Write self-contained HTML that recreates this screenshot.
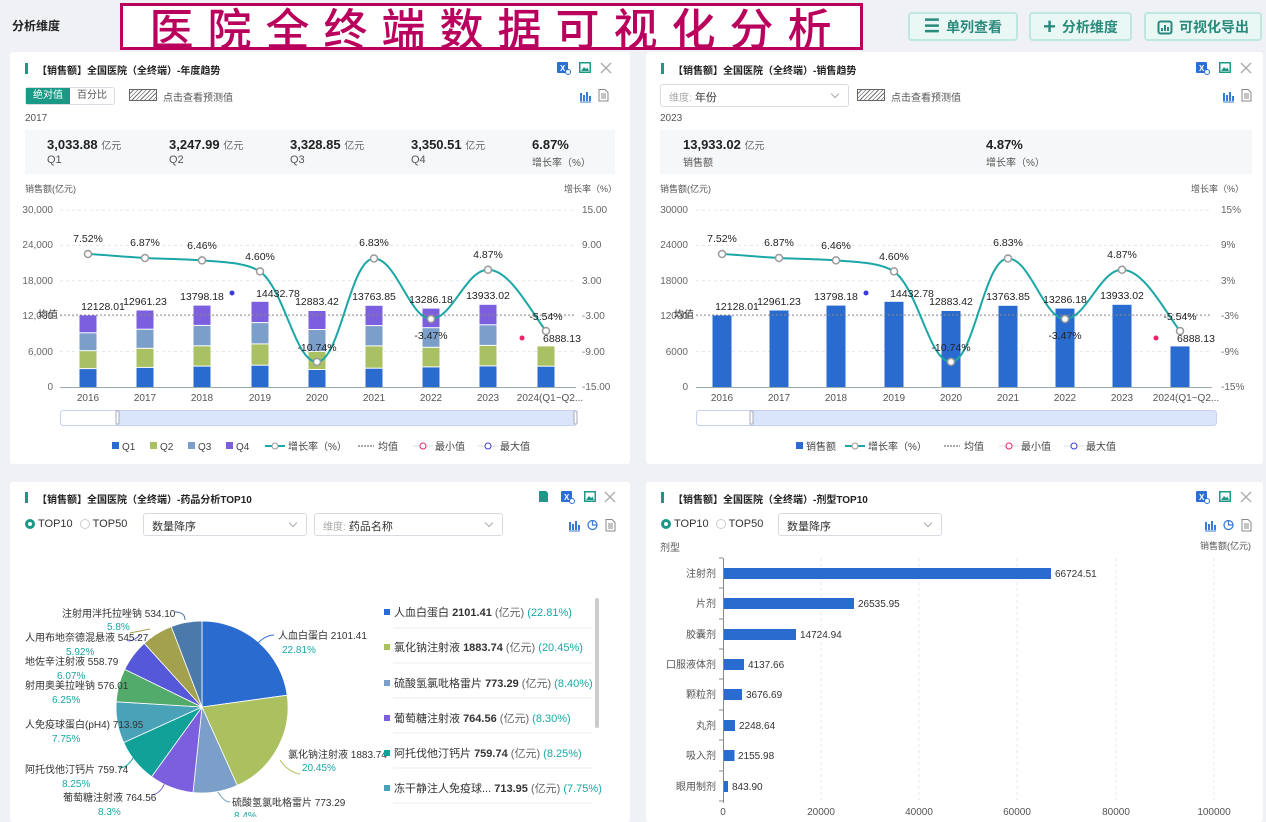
<!DOCTYPE html>
<html><head><meta charset="utf-8">
<style>
*{margin:0;padding:0;box-sizing:border-box}
body{width:1266px;height:817px;overflow:hidden;background:#eff1f5;font-family:"Liberation Sans","Noto Sans CJK SC",sans-serif;color:#333;position:relative}
.a{position:absolute}
.panel{position:absolute;background:#fff;border-radius:3px}
.title{position:absolute;font-size:10px;font-weight:bold;color:#222;white-space:nowrap}
.title:before{content:"";position:absolute;left:-12px;top:1px;width:3px;height:11px;background:#1a9a86}
.btn{position:absolute;top:12px;height:29px;border:2px solid #bfe6df;background:#e9f7f5;border-radius:4px;color:#2a8a7c;font-size:14px;font-weight:bold;display:flex;align-items:center;justify-content:center;gap:6px}
.sel{position:absolute;height:23px;border:1px solid #d8dce2;border-radius:3px;background:#fff;font-size:11px;color:#333;padding:4px 8px}
.sel:after{content:"";position:absolute;right:10px;top:6px;width:5px;height:5px;border-right:1px solid #aaa;border-bottom:1px solid #aaa;transform:rotate(45deg)}
.stat{position:absolute;background:#f6f7f8}
.num{font-size:13px;font-weight:bold;color:#222}
.num small{font-size:10px;font-weight:normal;color:#666}
.lbl{font-size:11px;color:#555}
.hatch{position:absolute;width:28px;height:12px;border:1px solid #666;background:repeating-linear-gradient(135deg,#fff 0 2px,#777 2px 3px)}
</style></head><body>

<div class="a" style="left:12px;top:17px;font-size:12px;font-weight:bold;color:#222">分析维度</div>
<div class="a" style="left:120px;top:3px;width:743px;height:47px;border:3px solid #b8005c;background:#fff;color:#b8005c;font-size:44px;line-height:40px;text-align:center;letter-spacing:14px;padding-left:12px;font-weight:500;font-family:'Noto Sans CJK SC',sans-serif;white-space:nowrap;overflow:hidden">医院全终端数据可视化分析</div>
<div class="btn" style="left:908px;width:110px"><span style="font-size:18px">☰</span>单列查看</div>
<div class="btn" style="left:1029px;width:103px"><span style="font-size:22px;font-weight:bold">+</span>分析维度</div>
<div class="btn" style="left:1144px;width:118px"><svg width="16" height="16" viewBox="0 0 16 16"><rect x="1.5" y="2.5" width="13" height="12" rx="2" fill="none" stroke="#2a8a7c" stroke-width="2"/><path d="M5 12V9M8 12V6M11 12V8" stroke="#2a8a7c" stroke-width="2"/></svg>可视化导出</div>

<div class="panel" style="left:10px;top:52px;width:620px;height:412px"></div>
<div class="panel" style="left:646px;top:52px;width:617px;height:412px"></div>
<div class="panel" style="left:10px;top:482px;width:620px;height:340px"></div>
<div class="panel" style="left:646px;top:482px;width:617px;height:340px"></div>

<div class="title" style="left:37px;top:62px">【销售额】全国医院（全终端）-年度趋势</div>
<div class="a" style="left:25px;top:87px;width:90px;height:18px;border:1px solid #d8dce2;border-radius:3px;font-size:10px;display:flex">
<span style="width:45px;background:#1a9a86;color:#fff;text-align:center;line-height:16px">绝对值</span><span style="width:45px;text-align:center;line-height:16px;color:#555">百分比</span></div>
<div class="hatch" style="left:129px;top:89px"></div>
<div class="a lbl" style="left:163px;top:89px;font-size:10px">点击查看预测值</div>
<div class="a lbl" style="left:25px;top:113px;font-size:10px">2017</div>
<div class="stat" style="left:25px;top:130px;width:590px;height:44px"></div>
<div class="a" style="left:47px;top:137px"><div class="num">3,033.88 <small>亿元</small></div><div class="lbl" style="margin-top:2px">Q1</div></div>
<div class="a" style="left:169px;top:137px"><div class="num">3,247.99 <small>亿元</small></div><div class="lbl" style="margin-top:2px">Q2</div></div>
<div class="a" style="left:290px;top:137px"><div class="num">3,328.85 <small>亿元</small></div><div class="lbl" style="margin-top:2px">Q3</div></div>
<div class="a" style="left:411px;top:137px"><div class="num">3,350.51 <small>亿元</small></div><div class="lbl" style="margin-top:2px">Q4</div></div>
<div class="a" style="left:532px;top:137px"><div class="num">6.87%</div><div class="lbl" style="margin-top:2px;font-size:10px">增长率（%）</div></div>
<div class="a lbl" style="left:25px;top:182px;font-size:9px">销售额(亿元)</div>
<div class="a lbl" style="left:564px;top:182px;font-size:9px">增长率（%）</div>

<div class="title" style="left:673px;top:62px">【销售额】全国医院（全终端）-销售趋势</div>
<div class="sel" style="left:660px;top:84px;width:189px"><span style="color:#aaa;font-size:10px">维度:</span> 年份</div>
<div class="hatch" style="left:857px;top:89px"></div>
<div class="a lbl" style="left:891px;top:89px;font-size:10px">点击查看预测值</div>
<div class="a lbl" style="left:660px;top:113px;font-size:10px">2023</div>
<div class="stat" style="left:660px;top:130px;width:592px;height:44px"></div>
<div class="a" style="left:683px;top:137px"><div class="num">13,933.02 <small>亿元</small></div><div class="lbl" style="margin-top:2px;font-size:10px">销售额</div></div>
<div class="a" style="left:986px;top:137px"><div class="num">4.87%</div><div class="lbl" style="margin-top:2px;font-size:10px">增长率（%）</div></div>
<div class="a lbl" style="left:660px;top:182px;font-size:9px">销售额(亿元)</div>
<div class="a lbl" style="left:1191px;top:182px;font-size:9px">增长率（%）</div>

<div class="title" style="left:37px;top:491px">【销售额】全国医院（全终端）-药品分析TOP10</div>
<div class="a" style="left:25px;top:518px;font-size:11px;display:flex;align-items:center;gap:3px"><span style="width:10px;height:10px;border-radius:50%;border:3px solid #1a9a86"></span>TOP10 <span style="width:10px;height:10px;border-radius:50%;border:1px solid #ccc;margin-left:4px"></span>TOP50</div>
<div class="sel" style="left:143px;top:513px;width:164px">数量降序</div>
<div class="sel" style="left:314px;top:513px;width:189px"><span style="color:#aaa;font-size:10px">维度:</span> 药品名称</div>

<div class="title" style="left:673px;top:491px">【销售额】全国医院（全终端）-剂型TOP10</div>
<div class="a" style="left:661px;top:518px;font-size:11px;display:flex;align-items:center;gap:3px"><span style="width:10px;height:10px;border-radius:50%;border:3px solid #1a9a86"></span>TOP10 <span style="width:10px;height:10px;border-radius:50%;border:1px solid #ccc;margin-left:4px"></span>TOP50</div>
<div class="sel" style="left:778px;top:513px;width:164px">数量降序</div>
<div class="a lbl" style="left:660px;top:539px;font-size:10px">剂型</div>
<div class="a lbl" style="left:1200px;top:539px;font-size:9px">销售额(亿元)</div>

<svg class="a" style="left:0;top:0" width="1266" height="817" font-family="Liberation Sans, Noto Sans CJK SC, sans-serif">
<defs>
<g id="xl"><rect x="0" y="0" width="11" height="11" rx="1" fill="#2b6fd6"/><text x="3" y="9" font-size="8" fill="#fff" font-weight="bold">X</text><circle cx="11" cy="10" r="2.5" fill="#fff" stroke="#2b6fd6"/></g>
<g id="img"><rect x="0" y="0" width="12" height="11" fill="#1a9a86"/><rect x="1.5" y="1.5" width="9" height="8" fill="#fff"/><path d="M2 9l3-4 2 2 1.5-1.5L10 9z" fill="#1a9a86"/></g>
<g id="cl"><path d="M0 0l10 10M10 0L0 10" stroke="#aaa" stroke-width="1.3"/></g>
<g id="bar"><path d="M1 11V3M4 11V5M7 11V2M10 11V6" stroke="#3a7bd5" stroke-width="2"/><path d="M0 12H11" stroke="#3a7bd5"/></g>
<g id="doc"><path d="M1 0.5h6l3 3v8.5h-9z" fill="none" stroke="#888"/><path d="M3 5h5M3 7h5M3 9h5" stroke="#888"/></g>
<g id="pie"><circle cx="5.5" cy="6" r="4.5" fill="none" stroke="#3a7bd5" stroke-width="1.3"/><path d="M5.5 1.5V6H10" fill="none" stroke="#3a7bd5" stroke-width="1.3"/></g>
</defs>
<use href="#xl" x="557" y="62"/><use href="#img" x="579" y="62"/><use href="#cl" x="601" y="63"/>
<use href="#bar" x="580" y="90"/><use href="#doc" x="598" y="89"/>
<use href="#xl" x="1196" y="62"/><use href="#img" x="1219" y="62"/><use href="#cl" x="1241" y="63"/>
<use href="#bar" x="1223" y="90"/><use href="#doc" x="1241" y="89"/>
<path d="M539 491h7l2 2v9h-9z" fill="#1a9a86"/><use href="#xl" x="561" y="491"/><use href="#img" x="584" y="491"/><use href="#cl" x="605" y="492"/>
<use href="#bar" x="569" y="519"/><use href="#pie" x="587" y="519"/><use href="#doc" x="605" y="519"/>
<use href="#xl" x="1196" y="491"/><use href="#img" x="1219" y="491"/><use href="#cl" x="1241" y="492"/>
<use href="#bar" x="1205" y="519"/><use href="#pie" x="1223" y="519"/><use href="#doc" x="1241" y="519"/>

<g stroke="#e3e8ee" stroke-dasharray="3,3">
<path d="M60 210H576M60 245.4H576M60 280.8H576M60 316.2H576M60 351.6H576"/>
<path d="M696 210H1212M696 245.4H1212M696 280.8H1212M696 316.2H1212M696 351.6H1212"/>
</g>
<path d="M60 387.5H576M696 387.5H1212" stroke="#9aa" />
<g font-size="10" fill="#666" text-anchor="end">
<text x="53" y="213">30,000</text><text x="53" y="248">24,000</text><text x="53" y="284">18,000</text><text x="53" y="319">12,000</text><text x="53" y="355">6,000</text><text x="53" y="390">0</text>
<text x="688" y="213">30000</text><text x="688" y="248">24000</text><text x="688" y="284">18000</text><text x="688" y="319">12000</text><text x="688" y="355">6000</text><text x="688" y="390">0</text>
</g>
<g font-size="10" fill="#666">
<text x="582" y="213">15.00</text><text x="582" y="248">9.00</text><text x="582" y="284">3.00</text><text x="582" y="319">-3.00</text><text x="582" y="355">-9.00</text><text x="582" y="390">-15.00</text>
<text x="1221" y="213">15%</text><text x="1221" y="248">9%</text><text x="1221" y="284">3%</text><text x="1221" y="319">-3%</text><text x="1221" y="355">-9%</text><text x="1221" y="390">-15%</text>
</g>
<g font-size="10" fill="#555" text-anchor="middle">
<text x="88" y="401">2016</text><text x="145" y="401">2017</text><text x="202" y="401">2018</text><text x="260" y="401">2019</text><text x="317" y="401">2020</text><text x="374" y="401">2021</text><text x="431" y="401">2022</text><text x="488" y="401">2023</text><text x="550" y="401">2024(Q1~Q2...</text>
<text x="722" y="401">2016</text><text x="779" y="401">2017</text><text x="836" y="401">2018</text><text x="894" y="401">2019</text><text x="951" y="401">2020</text><text x="1008" y="401">2021</text><text x="1065" y="401">2022</text><text x="1122" y="401">2023</text><text x="1186" y="401">2024(Q1~Q2...</text>
</g>
<g>
<g fill="#2a6bcf"><rect x="79.5" y="369.1" width="17" height="17.9"/><rect x="136.5" y="367.9" width="17" height="19.1"/><rect x="193.5" y="366.6" width="17" height="20.4"/><rect x="251.5" y="365.7" width="17" height="21.3"/><rect x="308.5" y="370" width="17" height="17"/><rect x="365.5" y="368.7" width="17" height="18.3"/><rect x="422.5" y="367.4" width="17" height="19.6"/><rect x="479.5" y="366.4" width="17" height="20.6"/><rect x="537.5" y="366.7" width="17" height="20.3"/></g>
<g fill="#a9c162"><rect x="79.5" y="351.2" width="17" height="16.9"/><rect x="136.5" y="348.8" width="17" height="18.1"/><rect x="193.5" y="346.3" width="17" height="19.3"/><rect x="251.5" y="344.4" width="17" height="20.3"/><rect x="308.5" y="352" width="17" height="17"/><rect x="365.5" y="346.4" width="17" height="21.3"/><rect x="422.5" y="347.8" width="17" height="18.6"/><rect x="479.5" y="345.9" width="17" height="19.5"/><rect x="537.5" y="346.4" width="17" height="19.3"/></g>
<g fill="#7c9fc9"><rect x="79.5" y="333.3" width="17" height="16.9"/><rect x="136.5" y="329.7" width="17" height="18.1"/><rect x="193.5" y="325.9" width="17" height="19.4"/><rect x="251.5" y="323.1" width="17" height="20.3"/><rect x="308.5" y="330" width="17" height="21"/><rect x="365.5" y="326.1" width="17" height="19.3"/><rect x="422.5" y="328.2" width="17" height="18.6"/><rect x="479.5" y="325.3" width="17" height="19.6"/></g>
<g fill="#7b5fdf"><rect x="79.5" y="315.4" width="17" height="16.9"/><rect x="136.5" y="310.5" width="17" height="18.2"/><rect x="193.5" y="305.6" width="17" height="19.3"/><rect x="251.5" y="301.8" width="17" height="20.3"/><rect x="308.5" y="311" width="17" height="18"/><rect x="365.5" y="305.8" width="17" height="19.3"/><rect x="422.5" y="308.6" width="17" height="18.6"/><rect x="479.5" y="304.8" width="17" height="19.5"/></g>
</g>
<g fill="#2a6bcf"><rect x="712.5" y="315.4" width="19" height="71.6"/><rect x="769.5" y="310.5" width="19" height="76.5"/><rect x="826.5" y="305.6" width="19" height="81.4"/><rect x="884.5" y="301.8" width="19" height="85.2"/><rect x="941.5" y="311" width="19" height="76"/><rect x="998.5" y="305.8" width="19" height="81.2"/><rect x="1055.5" y="308.6" width="19" height="78.4"/><rect x="1112.5" y="304.8" width="19" height="82.2"/><rect x="1170.5" y="346.4" width="19" height="40.6"/></g>
<path d="M60 315H576M696 315H1212" stroke="#888" stroke-dasharray="2,2"/>
<text x="38" y="318" font-size="10" fill="#333">均值</text><text x="674" y="318" font-size="10" fill="#333">均值</text>
<g id="gl">
<path d="M88,254 C107,255 126,257 145,258 C164,259 183,259 202,260.4 C221,262 245,262 260,271.4 C285,290 295,362 317,361.9 C340,362 350,258.5 374,258.5 C396,258.5 410,319 431,319 C452,319 466,269.8 488,269.8 C510,269.8 530,310 546,331" fill="none" stroke="#1aa7a5" stroke-width="2"/>
<g fill="#fff" stroke="#999" stroke-width="1.5"><circle cx="88" cy="254" r="3.5"/><circle cx="145" cy="258" r="3.5"/><circle cx="202" cy="260.4" r="3.5"/><circle cx="260" cy="271.4" r="3.5"/><circle cx="317" cy="361.9" r="3.5"/><circle cx="374" cy="258.5" r="3.5"/><circle cx="431" cy="319" r="3.5"/><circle cx="488" cy="269.8" r="3.5"/><circle cx="546" cy="331" r="3.5"/></g>
<g font-size="10.5" fill="#222" text-anchor="middle">
<text x="88" y="242">7.52%</text><text x="145" y="246">6.87%</text><text x="202" y="249">6.46%</text><text x="260" y="260">4.60%</text><text x="317" y="351">-10.74%</text><text x="374" y="246">6.83%</text><text x="431" y="339">-3.47%</text><text x="488" y="258">4.87%</text><text x="546" y="320">-5.54%</text>
<text x="103" y="310">12128.01</text><text x="145" y="305">12961.23</text><text x="202" y="300">13798.18</text><text x="278" y="297">14432.78</text><text x="317" y="305">12883.42</text><text x="374" y="300">13763.85</text><text x="431" y="303">13286.18</text><text x="488" y="299">13933.02</text><text x="562" y="342">6888.13</text>
</g>
<circle cx="232" cy="293" r="2.5" fill="#3b3bdd"/><circle cx="522" cy="338" r="2.5" fill="#ee2266"/>
</g>
<use href="#gl" x="634" y="0"/>
<rect x="60.5" y="410.5" width="516" height="15" rx="3" fill="#dae4fa" stroke="#c5d3ee"/><rect x="60.5" y="410.5" width="57" height="15" rx="3" fill="#fff" stroke="#c5d3ee"/><rect x="116" y="411" width="3" height="13" rx="1" fill="#fff" stroke="#aab"/><rect x="574" y="411" width="3" height="13" rx="1" fill="#fff" stroke="#aab"/>
<rect x="696.5" y="410.5" width="520" height="15" rx="3" fill="#dae4fa" stroke="#c5d3ee"/><rect x="696.5" y="410.5" width="55" height="15" rx="3" fill="#fff" stroke="#c5d3ee"/><rect x="750" y="411" width="3" height="13" rx="1" fill="#fff" stroke="#aab"/>
<g font-size="10" fill="#444">
<rect x="112" y="442" width="7" height="7" fill="#2a6bcf"/><text x="122" y="450">Q1</text>
<rect x="150" y="442" width="7" height="7" fill="#a9c162"/><text x="160" y="450">Q2</text>
<rect x="188" y="442" width="7" height="7" fill="#7c9fc9"/><text x="198" y="450">Q3</text>
<rect x="226" y="442" width="7" height="7" fill="#7b5fdf"/><text x="236" y="450">Q4</text>
<path d="M265 446h20" stroke="#1aa7a5" stroke-width="2"/><circle cx="275" cy="446" r="3" fill="#fff" stroke="#999"/><text x="288" y="450">增长率（%）</text>
<path d="M358 446h16" stroke="#555" stroke-dasharray="2,1"/><text x="378" y="450">均值</text>
<path d="M413 446h20" stroke="#ddd"/><circle cx="423" cy="446" r="3" fill="#fff" stroke="#ee2266"/><text x="435" y="450">最小值</text>
<path d="M478 446h20" stroke="#ddd"/><circle cx="488" cy="446" r="3" fill="#fff" stroke="#3b3bdd"/><text x="500" y="450">最大值</text>
<rect x="796" y="442" width="7" height="7" fill="#2a6bcf"/><text x="806" y="450">销售额</text>
<path d="M845 446h20" stroke="#1aa7a5" stroke-width="2"/><circle cx="855" cy="446" r="3" fill="#fff" stroke="#999"/><text x="868" y="450">增长率（%）</text>
<path d="M944 446h16" stroke="#555" stroke-dasharray="2,1"/><text x="964" y="450">均值</text>
<path d="M999 446h20" stroke="#ddd"/><circle cx="1009" cy="446" r="3" fill="#fff" stroke="#ee2266"/><text x="1021" y="450">最小值</text>
<path d="M1064 446h20" stroke="#ddd"/><circle cx="1074" cy="446" r="3" fill="#fff" stroke="#3b3bdd"/><text x="1086" y="450">最大值</text>
</g>

<g stroke="#fff" stroke-width="0.8">
<path d="M202 707L202 621A86 86 0 0 1 287.2 695.2Z" fill="#2a6bcf"/>
<path d="M202 707L287.2 695.2A86 86 0 0 1 237.3 785.4Z" fill="#abc160"/>
<path d="M202 707L237.3 785.4A86 86 0 0 1 193 792.5Z" fill="#7c9fc9"/>
<path d="M202 707L193 792.5A86 86 0 0 1 151.6 776.7Z" fill="#7b5fdf"/>
<path d="M202 707L151.6 776.7A86 86 0 0 1 123.7 742.6Z" fill="#12a199"/>
<path d="M202 707L123.7 742.6A86 86 0 0 1 116.2 701.8Z" fill="#4aa2b9"/>
<path d="M202 707L116.2 701.8A86 86 0 0 1 124.7 669.3Z" fill="#52ab6b"/>
<path d="M202 707L124.7 669.3A86 86 0 0 1 144.2 643.3Z" fill="#5558d8"/>
<path d="M202 707L144.2 643.3A86 86 0 0 1 171.3 626.6Z" fill="#a3a04e"/>
<path d="M202 707L171.3 626.6A86 86 0 0 1 202 621Z" fill="#4b79aa"/>
</g>
<g fill="none" stroke-width="1">
<path d="M258 643q8-8 16-8" stroke="#2a6bcf"/><path d="M280 760q8 12 20 14" stroke="#abc160"/><path d="M218 792q6 10 12 10" stroke="#7c9fc9"/><path d="M165 782q-4 12-14 13" stroke="#7b5fdf"/><path d="M133 758q-6 10-14 10" stroke="#12a199"/><path d="M140 635q-6 6-12 6" stroke="#5558d8"/><path d="M150 629q-10 2-20 4" stroke="#a3a04e"/><path d="M185 620q0-8-10-8" stroke="#4b79aa"/>
</g>
<g font-size="10" fill="#333">
<text x="278" y="639">人血白蛋白 2101.41</text><text x="282" y="653" fill="#1aa7a5">22.81%</text>
<text x="288" y="758">氯化钠注射液 1883.74</text><text x="302" y="771" fill="#1aa7a5">20.45%</text>
<text x="232" y="806">硫酸氢氯吡格雷片 773.29</text><text x="234" y="819" fill="#1aa7a5">8.4%</text>
<text x="63" y="801">葡萄糖注射液 764.56</text><text x="98" y="815" fill="#1aa7a5">8.3%</text>
<text x="25" y="773">阿托伐他汀钙片 759.74</text><text x="62" y="787" fill="#1aa7a5">8.25%</text>
<text x="25" y="728">人免疫球蛋白(pH4) 713.95</text><text x="52" y="742" fill="#1aa7a5">7.75%</text>
<text x="25" y="689">射用奥美拉唑钠 576.01</text><text x="52" y="703" fill="#1aa7a5">6.25%</text>
<text x="25" y="665">地佐辛注射液 558.79</text><text x="57" y="679" fill="#1aa7a5">6.07%</text>
<text x="25" y="641">人用布地奈德混悬液 545.27</text><text x="66" y="655" fill="#1aa7a5">5.92%</text>
<text x="62" y="617">注射用泮托拉唑钠 534.10</text><text x="107" y="630" fill="#1aa7a5">5.8%</text>
</g>
<g font-size="11" fill="#333">
<rect x="384" y="609" width="6" height="6" fill="#2a6bcf"/><text x="394" y="616">人血白蛋白 <tspan font-weight="bold">2101.41</tspan> <tspan fill="#666">(亿元)</tspan> <tspan fill="#1aa7a5">(22.81%)</tspan></text>
<rect x="384" y="644" width="6" height="6" fill="#abc160"/><text x="394" y="651">氯化钠注射液 <tspan font-weight="bold">1883.74</tspan> <tspan fill="#666">(亿元)</tspan> <tspan fill="#1aa7a5">(20.45%)</tspan></text>
<rect x="384" y="680" width="6" height="6" fill="#7c9fc9"/><text x="394" y="687">硫酸氢氯吡格雷片 <tspan font-weight="bold">773.29</tspan> <tspan fill="#666">(亿元)</tspan> <tspan fill="#1aa7a5">(8.40%)</tspan></text>
<rect x="384" y="715" width="6" height="6" fill="#7b5fdf"/><text x="394" y="722">葡萄糖注射液 <tspan font-weight="bold">764.56</tspan> <tspan fill="#666">(亿元)</tspan> <tspan fill="#1aa7a5">(8.30%)</tspan></text>
<rect x="384" y="750" width="6" height="6" fill="#12a199"/><text x="394" y="757">阿托伐他汀钙片 <tspan font-weight="bold">759.74</tspan> <tspan fill="#666">(亿元)</tspan> <tspan fill="#1aa7a5">(8.25%)</tspan></text>
<rect x="384" y="785" width="6" height="6" fill="#4aa2b9"/><text x="394" y="792">冻干静注人免疫球... <tspan font-weight="bold">713.95</tspan> <tspan fill="#666">(亿元)</tspan> <tspan fill="#1aa7a5">(7.75%)</tspan></text>
</g>
<path d="M393 628H592M393 663H592M393 698H592M393 733H592M393 768H592M393 803H592" stroke="#eee"/>
<rect x="595" y="598" width="4" height="130" rx="2" fill="#ccc"/>

<g stroke="#e3eaef" stroke-dasharray="3,3"><path d="M821 558V800M919 558V800M1017 558V800M1116 558V800M1214 558V800"/></g>
<path d="M723.5 558V803" stroke="#888"/>
<g stroke="#888"><path d="M719 558h4M719 588h4M719 619h4M719 649h4M719 679h4M719 710h4M719 740h4M719 771h4M719 801h4"/></g>
<g fill="#2a6bcf">
<rect x="724" y="568" width="327" height="11"/><rect x="724" y="598" width="130" height="11"/><rect x="724" y="629" width="72" height="11"/><rect x="724" y="659" width="20" height="11"/><rect x="724" y="689" width="18" height="11"/><rect x="724" y="720" width="11" height="11"/><rect x="724" y="750" width="10.5" height="11"/><rect x="724" y="781" width="4" height="11"/>
</g>
<g font-size="10" fill="#333">
<text x="1055" y="577">66724.51</text><text x="858" y="607">26535.95</text><text x="800" y="638">14724.94</text><text x="748" y="668">4137.66</text><text x="746" y="698">3676.69</text><text x="739" y="729">2248.64</text><text x="738" y="759">2155.98</text><text x="732" y="790">843.90</text>
</g>
<g font-size="10" fill="#555" text-anchor="end">
<text x="716" y="577">注射剂</text><text x="716" y="607">片剂</text><text x="716" y="638">胶囊剂</text><text x="716" y="668">口服液体剂</text><text x="716" y="698">颗粒剂</text><text x="716" y="729">丸剂</text><text x="716" y="759">吸入剂</text><text x="716" y="790">眼用制剂</text>
</g>
<g font-size="10" fill="#555" text-anchor="middle">
<text x="723" y="815">0</text><text x="821" y="815">20000</text><text x="919" y="815">40000</text><text x="1017" y="815">60000</text><text x="1116" y="815">80000</text><text x="1214" y="815">100000</text>
</g>
</svg>
</body></html>
